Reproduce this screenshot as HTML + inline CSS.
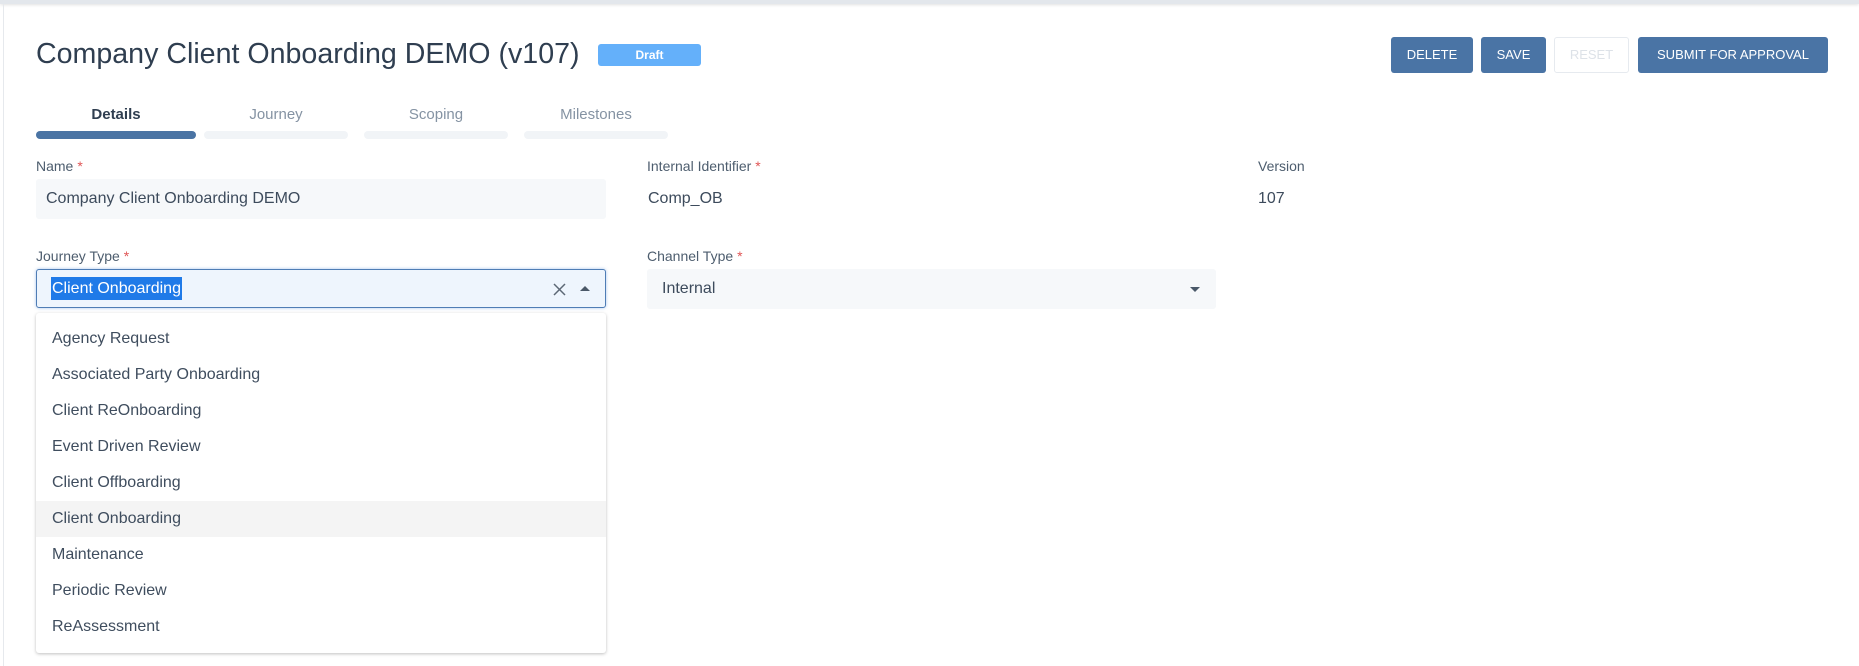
<!DOCTYPE html>
<html><head><meta charset="utf-8"><style>
*{box-sizing:border-box;margin:0;padding:0}
body{width:1859px;height:666px;background:#fff;font-family:"Liberation Sans",sans-serif;color:#3d4b5c;position:relative;overflow:hidden}
.abs{position:absolute}
.topbar{left:0;top:0;width:1859px;height:4px;background:#e3e7ec;box-shadow:0 1px 3px rgba(0,0,0,.12)}
.leftline{left:3px;top:4px;width:1px;height:662px;background:#e6e9ed}
.title{left:36px;top:38px;font-size:28.6px;color:#2f3e50;white-space:nowrap}
.badge{left:598px;top:44px;width:103px;height:22px;background:#64b0fa;border-radius:3px;color:#fff;font-size:12px;font-weight:bold;text-align:center;line-height:22px}
.btn{top:37px;height:36px;border-radius:3px;background:#4a74a5;color:#fff;font-size:13px;text-align:center;line-height:36px}
.tab{top:106px;font-size:15px;color:#8593a3;text-align:center}
.bar{top:131px;height:8px;border-radius:4px;background:#f1f4f7}
.lbl{font-size:14px;color:#4d5d6e}
.lbl b{color:#e05555;font-weight:normal;margin-left:4px}
.inp{height:40px;border-radius:3px;background:#f6f8fa;font-size:16px;line-height:40px;padding-left:10px;color:#3d4b5c}
.item{left:52px;font-size:16px;color:#3f4d5e}
</style></head><body>
<div class="abs topbar"></div>
<div class="abs leftline"></div>
<div class="abs title">Company Client Onboarding DEMO (v107)</div>
<div class="abs badge">Draft</div>
<div class="abs btn" style="left:1391px;width:82px">DELETE</div>
<div class="abs btn" style="left:1481px;width:65px">SAVE</div>
<div class="abs btn" style="left:1554px;width:75px;background:#fff;border:1px solid #e6eaef;color:#dde2e8;line-height:34px">RESET</div>
<div class="abs btn" style="left:1638px;width:190px">SUBMIT FOR APPROVAL</div>

<div class="abs tab" style="left:36px;width:160px;color:#2f3e50;font-weight:bold">Details</div>
<div class="abs tab" style="left:204px;width:144px">Journey</div>
<div class="abs tab" style="left:364px;width:144px">Scoping</div>
<div class="abs tab" style="left:524px;width:144px">Milestones</div>
<div class="abs bar" style="left:36px;width:160px;background:#4a74a4"></div>
<div class="abs bar" style="left:204px;width:144px"></div>
<div class="abs bar" style="left:364px;width:144px"></div>
<div class="abs bar" style="left:524px;width:144px"></div>

<div class="abs lbl" style="left:36px;top:158px">Name<b>*</b></div>
<div class="abs inp" style="left:36px;top:179px;width:570px">Company Client Onboarding DEMO</div>
<div class="abs lbl" style="left:647px;top:158px">Internal Identifier<b>*</b></div>
<div class="abs" style="left:648px;top:190px;font-size:16px">Comp_OB</div>
<div class="abs lbl" style="left:1258px;top:158px">Version</div>
<div class="abs" style="left:1258px;top:190px;font-size:16px">107</div>

<div class="abs lbl" style="left:36px;top:248px">Journey Type<b>*</b></div>
<div class="abs" style="left:36px;top:269px;width:570px;height:39px;border:1px solid #4f7db5;border-radius:3px;background:#eef5fd;box-shadow:0 0 3px rgba(80,140,220,.5)"></div>
<div class="abs" style="left:51px;top:277px;height:23px;background:#1f7ae8;color:#fff;font-size:16px;line-height:23px;padding:0 1px">Client Onboarding</div>
<svg class="abs" style="left:553px;top:283px" width="13" height="13" viewBox="0 0 13 13"><path d="M1 1L12 12M12 1L1 12" stroke="#5c6775" stroke-width="1.5"/></svg>
<svg class="abs" style="left:580px;top:285px" width="10" height="7" viewBox="0 0 10 7"><path d="M0 6L5 1L10 6Z" fill="#4a5868"/></svg>

<div class="abs lbl" style="left:647px;top:248px">Channel Type<b>*</b></div>
<div class="abs inp" style="left:647px;top:269px;width:569px;padding-left:15px">Internal</div>
<svg class="abs" style="left:1190px;top:286px" width="10" height="7" viewBox="0 0 10 7"><path d="M0 1L5 6L10 1Z" fill="#4a5868"/></svg>

<div class="abs" style="left:36px;top:313px;width:570px;height:340px;background:#fff;border-radius:3px;box-shadow:0 1px 3px rgba(0,0,0,.25)"></div>
<div class="abs" style="left:36px;top:501px;width:570px;height:36px;background:#f4f4f4"></div>
<div class="abs item" style="top:330px">Agency Request</div>
<div class="abs item" style="top:366px">Associated Party Onboarding</div>
<div class="abs item" style="top:402px">Client ReOnboarding</div>
<div class="abs item" style="top:438px">Event Driven Review</div>
<div class="abs item" style="top:474px">Client Offboarding</div>
<div class="abs item" style="top:510px">Client Onboarding</div>
<div class="abs item" style="top:546px">Maintenance</div>
<div class="abs item" style="top:582px">Periodic Review</div>
<div class="abs item" style="top:618px">ReAssessment</div>
</body></html>
